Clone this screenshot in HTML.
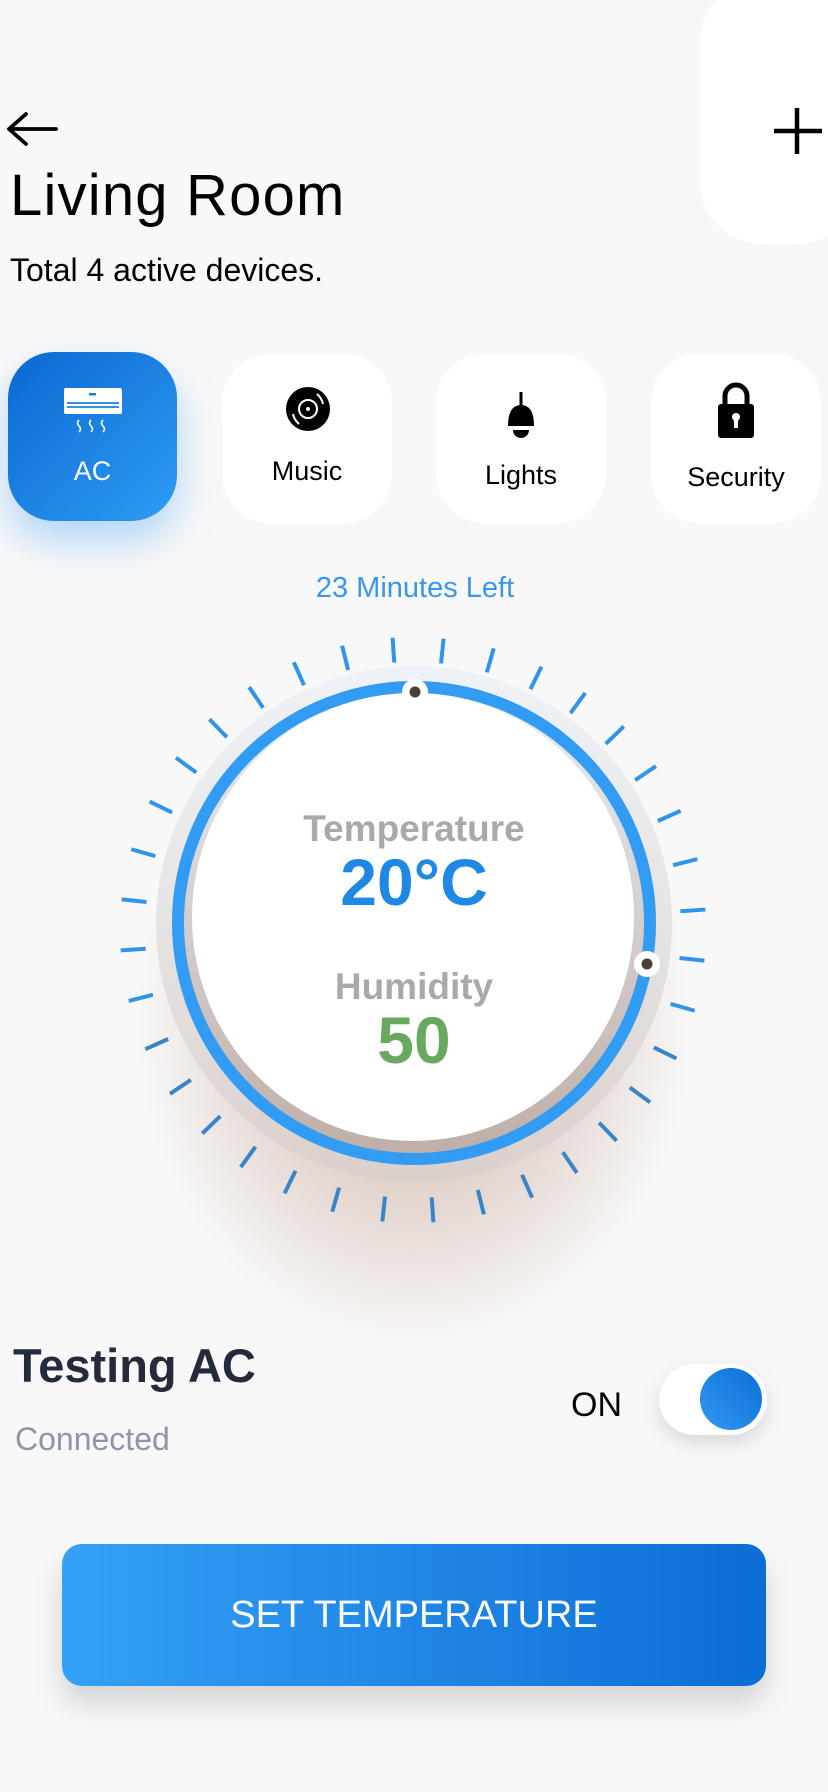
<!DOCTYPE html>
<html><head><meta charset="utf-8"><style>
*{margin:0;padding:0;box-sizing:border-box}
body{width:828px;height:1792px;background:#f8f8f8;font-family:"Liberation Sans",sans-serif;position:relative;overflow:hidden}
.abs{position:absolute}
.card{position:absolute;top:354px;width:170px;height:169px;background:#fff;border-radius:48px;text-align:center}
.card .lbl{position:absolute;left:0;right:0;font-size:27px;color:#000}
</style></head><body>
<div class="abs" style="left:700px;top:-20px;width:160px;height:264px;background:#fff;border-radius:62px"></div>
<svg class="abs" style="left:770px;top:106px" width="54" height="50"><path d="M27 2V48M4 25H52" stroke="#000" stroke-width="4.5"/></svg>
<svg class="abs" style="left:4px;top:112px" width="56" height="36"><path d="M52 17H5M22 2L5 17L22 32" stroke="#000" stroke-width="3.8" fill="none" stroke-linecap="round" stroke-linejoin="round"/></svg>
<div class="abs" style="left:10px;top:162px;font-size:58px;color:#000;letter-spacing:1.2px">Living Room</div>
<div class="abs" style="left:10px;top:252px;font-size:32px;color:#000">Total 4 active devices.</div>

<div class="abs" style="left:8px;top:352px;width:169px;height:169px;border-radius:46px;background:linear-gradient(135deg,#0a68d0,#2e9cf5);box-shadow:0 20px 40px rgba(46,150,245,0.35)">
<svg class="abs" style="left:54px;top:34px" width="64" height="50"><rect x="2" y="2" width="58" height="26" rx="2" fill="#fff"/><rect x="27" y="7" width="7" height="2.5" fill="#1a80e0"/><path d="M5 17H57M5 21H57" stroke="#1a80e0" stroke-width="1.8"/><path d="M17 34q-3 3 0 6t0 6M29 34q-3 3 0 6t0 6M41 34q-3 3 0 6t0 6" stroke="#fff" stroke-width="1.6" fill="none"/></svg>
<div class="abs" style="left:0;right:0;top:104px;text-align:center;color:#fff;font-size:27px">AC</div></div>

<div class="card" style="left:222px"><svg class="abs" style="left:63px;top:32px" width="46" height="46"><circle cx="23" cy="23" r="22" fill="#000"/><circle cx="23" cy="23" r="9" fill="none" stroke="#fff" stroke-width="2"/><circle cx="23" cy="23" r="2" fill="#fff"/><path d="M32 8a18 18 0 0 1 6 10M14 38a18 18 0 0 1-6-10" stroke="#fff" stroke-width="2" fill="none"/></svg><div class="lbl" style="top:102px">Music</div></div>
<div class="card" style="left:436px"><svg class="abs" style="left:62px;top:36px" width="46" height="56"><path d="M23 2V16" stroke="#000" stroke-width="3"/><path d="M10 36Q10 15 23 15Q36 15 36 36Z" fill="#000"/><path d="M15 40A8 8 0 0 0 31 40Z" fill="#000"/></svg><div class="lbl" style="top:106px">Lights</div></div>
<div class="card" style="left:651px"><svg class="abs" style="left:62px;top:28px" width="46" height="58"><path d="M12 24V14a11 11 0 0 1 22 0V24" stroke="#000" stroke-width="5" fill="none"/><rect x="5" y="22" width="36" height="34" rx="3" fill="#000"/><circle cx="23" cy="35" r="4" fill="#fff"/><rect x="21" y="36" width="4" height="10" fill="#fff"/></svg><div class="lbl" style="top:108px">Security</div></div>

<div class="abs" style="left:0;width:828px;top:572px;text-align:center;font-size:29px;color:#3797ee;padding-left:2px">23 Minutes Left</div>

<div class="abs" style="left:134px;top:700px;width:560px;height:650px;border-radius:50%;background:radial-gradient(ellipse at 50% 50%,rgba(165,110,85,0.5),rgba(165,110,85,0.2) 45%,rgba(165,110,85,0) 70%)"></div>
<svg class="abs" style="left:0;top:0" width="828" height="1300">
<defs><linearGradient id="ig" x1="0" y1="0" x2="0" y2="1"><stop offset="0" stop-color="#e9eef4"/><stop offset="1" stop-color="#bfaea7"/></linearGradient>
<linearGradient id="og" x1="0" y1="0" x2="0" y2="1"><stop offset="0" stop-color="#edf1f6"/><stop offset="1" stop-color="#d9cfcb"/></linearGradient></defs>
<g stroke-width="4" stroke-linecap="butt">
<g stroke="#2e94ec">
<line x1="413" y1="662" x2="413" y2="637" transform="rotate(-4 413 930)"/>
<line x1="413" y1="662" x2="413" y2="637" transform="rotate(6 413 930)"/>
<line x1="413" y1="662" x2="413" y2="637" transform="rotate(16 413 930)"/>
<line x1="413" y1="662" x2="413" y2="637" transform="rotate(26 413 930)"/>
<line x1="413" y1="662" x2="413" y2="637" transform="rotate(36 413 930)"/>
<line x1="413" y1="662" x2="413" y2="637" transform="rotate(46 413 930)"/>
<line x1="413" y1="662" x2="413" y2="637" transform="rotate(56 413 930)"/>
<line x1="413" y1="662" x2="413" y2="637" transform="rotate(66 413 930)"/>
<line x1="413" y1="662" x2="413" y2="637" transform="rotate(76 413 930)"/>
<line x1="413" y1="662" x2="413" y2="637" transform="rotate(86 413 930)"/>
<line x1="413" y1="662" x2="413" y2="637" transform="rotate(96 413 930)"/>
<line x1="413" y1="662" x2="413" y2="637" transform="rotate(106 413 930)"/>
<line x1="413" y1="662" x2="413" y2="637" transform="rotate(-14 413 930)"/>
<line x1="413" y1="662" x2="413" y2="637" transform="rotate(-24 413 930)"/>
<line x1="413" y1="662" x2="413" y2="637" transform="rotate(-34 413 930)"/>
<line x1="413" y1="662" x2="413" y2="637" transform="rotate(-44 413 930)"/>
<line x1="413" y1="662" x2="413" y2="637" transform="rotate(-54 413 930)"/>
<line x1="413" y1="662" x2="413" y2="637" transform="rotate(-64 413 930)"/>
<line x1="413" y1="662" x2="413" y2="637" transform="rotate(-74 413 930)"/>
<line x1="413" y1="662" x2="413" y2="637" transform="rotate(-84 413 930)"/>
<line x1="413" y1="662" x2="413" y2="637" transform="rotate(-94 413 930)"/>
<line x1="413" y1="662" x2="413" y2="637" transform="rotate(-104 413 930)"/>
</g>
<g stroke="#3a84c8">
<line x1="413" y1="662" x2="413" y2="637" transform="rotate(116 413 930)"/>
<line x1="413" y1="662" x2="413" y2="637" transform="rotate(126 413 930)"/>
<line x1="413" y1="662" x2="413" y2="637" transform="rotate(136 413 930)"/>
<line x1="413" y1="662" x2="413" y2="637" transform="rotate(146 413 930)"/>
<line x1="413" y1="662" x2="413" y2="637" transform="rotate(156 413 930)"/>
<line x1="413" y1="662" x2="413" y2="637" transform="rotate(166 413 930)"/>
<line x1="413" y1="662" x2="413" y2="637" transform="rotate(176 413 930)"/>
<line x1="413" y1="662" x2="413" y2="637" transform="rotate(186 413 930)"/>
<line x1="413" y1="662" x2="413" y2="637" transform="rotate(196 413 930)"/>
<line x1="413" y1="662" x2="413" y2="637" transform="rotate(206 413 930)"/>
<line x1="413" y1="662" x2="413" y2="637" transform="rotate(216 413 930)"/>
<line x1="413" y1="662" x2="413" y2="637" transform="rotate(226 413 930)"/>
<line x1="413" y1="662" x2="413" y2="637" transform="rotate(236 413 930)"/>
<line x1="413" y1="662" x2="413" y2="637" transform="rotate(246 413 930)"/>
</g></g>
<circle cx="414" cy="924" r="258" fill="url(#og)" opacity="0.85"/>
<circle cx="414" cy="923" r="236" fill="url(#ig)"/>
<circle cx="414" cy="923" r="236" fill="none" stroke="#329cf4" stroke-width="12"/>
<ellipse cx="413" cy="917" rx="221" ry="224" fill="#fff"/>
<circle cx="415" cy="692" r="13" fill="#fff"/><circle cx="415" cy="692" r="5.5" fill="#4a3e38"/>
<circle cx="647" cy="964" r="13" fill="#fff"/><circle cx="647" cy="964" r="5.5" fill="#4a3e38"/>
</svg>
<div class="abs" style="left:0;width:828px;top:808px;text-align:center;font-size:37px;font-weight:bold;color:#a9a9a9">Temperature</div>
<div class="abs" style="left:0;width:828px;top:844px;text-align:center;font-size:66px;font-weight:bold;color:#1e88e5">20°C</div>
<div class="abs" style="left:0;width:828px;top:966px;text-align:center;font-size:37px;font-weight:bold;color:#a9a9a9">Humidity</div>
<div class="abs" style="left:0;width:828px;top:1002px;text-align:center;font-size:66px;font-weight:bold;color:#6aa860">50</div>

<div class="abs" style="left:13px;top:1338px;font-size:47px;font-weight:bold;color:#232a3b">Testing AC</div>
<div class="abs" style="left:15px;top:1421px;font-size:32px;color:#8d95a8">Connected</div>
<div class="abs" style="left:571px;top:1386px;font-size:34px;color:#000">ON</div>
<div class="abs" style="left:659px;top:1364px;width:108px;height:71px;border-radius:36px;background:#fff;box-shadow:0 8px 20px rgba(0,0,0,0.13)"><div class="abs" style="left:41px;top:4px;width:62px;height:62px;border-radius:50%;background:linear-gradient(225deg,#0b6fd6,#3199f2)"></div></div>

<div class="abs" style="left:62px;top:1544px;width:704px;height:142px;border-radius:20px;background:linear-gradient(90deg,#34a0f6,#0b6dd5);box-shadow:0 18px 30px rgba(0,0,0,0.15);color:#fff;font-size:38px;text-align:center;line-height:142px">SET TEMPERATURE</div>
</body></html>
